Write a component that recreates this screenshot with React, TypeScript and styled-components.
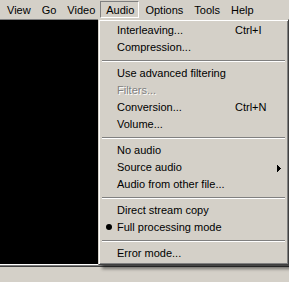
import styled, { createGlobalStyle, css } from 'styled-components';

const GlobalStyle = createGlobalStyle`
  html, body {
    margin: 0;
    padding: 0;
    background: #d4d0c8;
  }
  body {
    font-family: "Liberation Sans", Arial, sans-serif;
    font-size: 11px;
    color: #000;
  }
`;

const Window = styled.div`
  position: relative;
  width: 289px;
  height: 282px;
  overflow: hidden;
  background: #d4d0c8;
`;

const MenuBar = styled.div`
  display: flex;
  height: 19px;
  box-sizing: border-box;
  padding: 1px 0 0 1px;
`;

const BarItem = styled.div<{ $open?: boolean }>`
  height: 17px;
  box-sizing: border-box;
  padding: 1px 4px 0 5px;
  line-height: 14px;
  border: 1px solid transparent;
  white-space: nowrap;
  ${(p) =>
    p.$open &&
    css`
      border-color: #808080 #fff #fff #808080;
    `}
`;

const Screen = styled.div`
  height: 244px;
  background: #000;
  border-top: 1px solid #808080;
  border-bottom: 1px solid #fff;
`;

const Track = styled.div`
  border-top: 1px solid #808080;
  border-bottom: 1px solid #404040;
`;

const Dropdown = styled.div`
  position: absolute;
  top: 19px;
  left: 98px;
  width: 191px;
  box-sizing: border-box;
  padding: 2px;
  background: #d4d0c8;
  border: 1px solid;
  border-color: #d4d0c8 #404040 #404040 #d4d0c8;
  box-shadow: inset 1px 1px #fff, inset -1px -1px #808080,
    4px 4px 3px rgba(0, 0, 0, 0.45);
`;

const Item = styled.div<{ $disabled?: boolean }>`
  display: grid;
  grid-template-columns: 16px 118px 37px 14px;
  height: 17px;
  line-height: 17px;
  white-space: nowrap;
  color: ${(p) => (p.$disabled ? '#808080' : '#000')};
  ${(p) =>
    p.$disabled &&
    css`
      text-shadow: 1px 1px 0 #fff;
    `}
`;

const Mark = styled.span`
  display: flex;
  align-items: center;
  justify-content: center;
`;

const Bullet = styled.span`
  width: 6px;
  height: 6px;
  margin-top: -1px;
  border-radius: 50%;
  background: #000;
`;

const Label = styled.span``;

const Shortcut = styled.span``;

const Arrow = styled.span`
  display: flex;
  align-items: center;
  justify-content: center;
  padding-top: 1px;
`;

const Rule = styled.div`
  height: 0;
  margin: 4px 1px 3px;
  border-top: 1px solid #808080;
  border-bottom: 1px solid #fff;
`;

type Entry =
  | 'sep'
  | {
      label: string;
      shortcut?: string;
      disabled?: boolean;
      checked?: boolean;
      submenu?: boolean;
    };

const barItems = ['View', 'Go', 'Video', 'Audio', 'Options', 'Tools', 'Help'];

const entries: Entry[] = [
  { label: 'Interleaving...', shortcut: 'Ctrl+I' },
  { label: 'Compression...' },
  'sep',
  { label: 'Use advanced filtering' },
  { label: 'Filters...', disabled: true },
  { label: 'Conversion...', shortcut: 'Ctrl+N' },
  { label: 'Volume...' },
  'sep',
  { label: 'No audio' },
  { label: 'Source audio', submenu: true },
  { label: 'Audio from other file...' },
  'sep',
  { label: 'Direct stream copy' },
  { label: 'Full processing mode', checked: true },
  'sep',
  { label: 'Error mode...' },
];

export default function App() {
  return (
    <Window>
      <GlobalStyle />
      <MenuBar>
        {barItems.map((name) => (
          <BarItem key={name} $open={name === 'Audio'}>
            {name}
          </BarItem>
        ))}
      </MenuBar>
      <Screen />
      <Track />
      <Dropdown>
        {entries.map((e, i) =>
          e === 'sep' ? (
            <Rule key={i} />
          ) : (
            <Item key={i} $disabled={e.disabled}>
              <Mark>{e.checked && <Bullet />}</Mark>
              <Label>{e.label}</Label>
              <Shortcut>{e.shortcut}</Shortcut>
              <Arrow>
                {e.submenu && (
                  <svg width="4" height="7" viewBox="0 0 4 7" shapeRendering="crispEdges">
                    <polygon points="0,0 4,3.5 0,7" fill="#000" />
                  </svg>
                )}
              </Arrow>
            </Item>
          )
        )}
      </Dropdown>
    </Window>
  );
}
